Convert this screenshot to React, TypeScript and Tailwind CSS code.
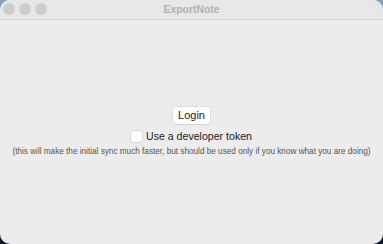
export default function App() {
  return (
    <div className="w-[383px] h-[244px] bg-[linear-gradient(to_bottom,#8a9cc4,#101828)]" style={{ fontFamily: "'Liberation Sans', Arial, sans-serif" }}>
      <div className="w-full h-full rounded-[10px] overflow-hidden bg-[#ececec] flex flex-col">
        <div className="relative h-[20px] bg-[#e7e7e7] border-b border-[#d6d6d6] flex items-center justify-center shrink-0">
          <div className="absolute left-[3px] top-[3px] flex gap-[4px]">
            <div className="w-[12px] h-[12px] rounded-full bg-[#cdcdcd]" />
            <div className="w-[12px] h-[12px] rounded-full bg-[#cdcdcd]" />
            <div className="w-[12px] h-[12px] rounded-full bg-[#cdcdcd]" />
          </div>
          <span className="text-[10.4px] font-bold text-[#b2b2b2]">ExportNote</span>
        </div>
        <div className="flex-1 flex flex-col items-center pt-[87px]">
          <button className="h-[17px] w-[37px] bg-white rounded-[4px] text-[11px] text-[#222] leading-none shadow-[0_0_0_0.5px_#d0d0d0,0_1px_1px_rgba(0,0,0,0.1)]">Login</button>
          <div className="mt-[6px] flex items-center gap-[4px]">
            <div className="w-[11px] h-[11px] bg-white rounded-[3px] shadow-[0_0_0_0.5px_#c8c8c8,0_1px_1px_rgba(0,0,0,0.08)]" />
            <span className="text-[10.6px] text-[#222] leading-[13px]">Use a developer token</span>
          </div>
          <div className="mt-[5px] text-[8.2px] text-[#555] leading-none whitespace-nowrap">(this will make the initial sync much faster, but should be used only if you know what you are doing)</div>
        </div>
      </div>
    </div>
  );
}
